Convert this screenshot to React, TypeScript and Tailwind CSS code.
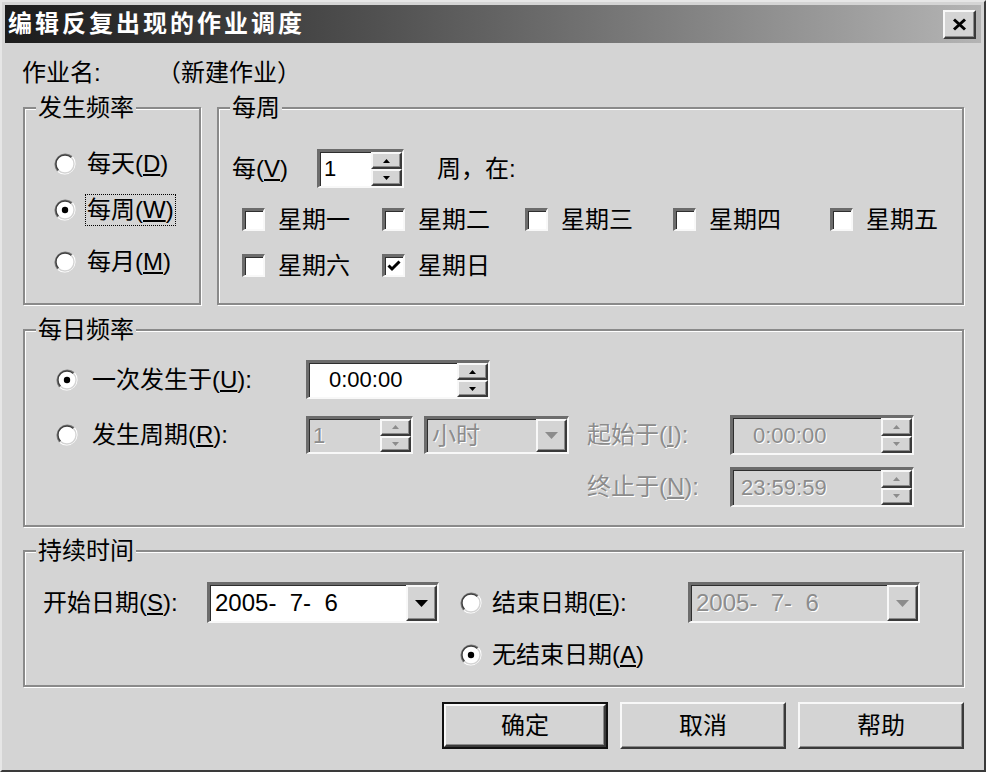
import React from "react";

const FONT = "font-['Liberation_Sans','Noto_Sans_CJK_SC',sans-serif]";
const SUNKEN =
  "border-t-[3px] border-l-[3px] border-r-2 border-b-2 border-t-[#6c6c6c] border-l-[#6c6c6c] border-r-[#f8f8f8] border-b-[#f8f8f8] shadow-[inset_1px_1px_0_#2e2e2e]";
const RAISED =
  "border-2 border-t-[#f8f8f8] border-l-[#f8f8f8] border-r-[#3a3a3a] border-b-[#3a3a3a] shadow-[inset_-1px_-1px_0_#8a8a8a]";
const DIS = "text-[#8c8c8c] [text-shadow:1px_1px_0_#fff]";

function Radio({ checked = false }: { checked?: boolean }) {
  return (
    <svg width="22" height="22" viewBox="0 0 22 22" className="shrink-0">
      <circle cx="11" cy="11" r="9.5" fill="#fff" />
      <path d="M3.8 18.2A10.2 10.2 0 0 1 18.2 3.8" fill="none" stroke="#808080" strokeWidth="1.6" />
      <path d="M4.6 17.4A9 9 0 0 1 17.4 4.6" fill="none" stroke="#404040" strokeWidth="1.4" />
      <path d="M18.2 3.8A10.2 10.2 0 0 1 3.8 18.2" fill="none" stroke="#fff" strokeWidth="1.6" />
      <path d="M17.4 4.6A9 9 0 0 1 4.6 17.4" fill="none" stroke="#d4d4d4" strokeWidth="1.4" />
      {checked && <circle cx="11" cy="11" r="3.2" fill="#000" />}
    </svg>
  );
}

function Check({ checked = false }: { checked?: boolean }) {
  return (
    <div className={`w-[23px] h-[23px] shrink-0 bg-white ${SUNKEN} flex items-center justify-center`}>
      {checked && (
        <svg width="14" height="12" viewBox="0 0 14 12">
          <path d="M1.5 5.5L5 9L12.5 1.5" fill="none" stroke="#000" strokeWidth="3" />
        </svg>
      )}
    </div>
  );
}

function RadioItem({
  checked,
  focus,
  children,
}: {
  checked?: boolean;
  focus?: boolean;
  children: React.ReactNode;
}) {
  return (
    <div className="flex items-center h-[30px]">
      <Radio checked={checked} />
      <span
        className={`ml-[9px] px-[1px] leading-[30px] border border-dotted ${focus ? "border-black" : "border-transparent"}`}
      >
        {children}
      </span>
    </div>
  );
}

function DayBox({ label, checked, className }: { label: string; checked?: boolean; className?: string }) {
  return (
    <div className={`flex items-center ${className ?? ""}`}>
      <Check checked={checked} />
      <span className="ml-[13px]">{label}</span>
    </div>
  );
}

function Spin({ disabled }: { disabled?: boolean }) {
  const c = disabled ? "#8c8c8c" : "#000";
  return (
    <div className="flex flex-col w-[31px] shrink-0">
      <div className={`flex-1 bg-[#d4d4d4] ${RAISED} flex items-center justify-center`}>
        <svg width="7" height="4" viewBox="0 0 7 4">
          <path d="M3.5 0L7 4H0Z" fill={c} />
        </svg>
      </div>
      <div className={`flex-1 bg-[#d4d4d4] ${RAISED} flex items-center justify-center`}>
        <svg width="7" height="4" viewBox="0 0 7 4">
          <path d="M0 0H7L3.5 4Z" fill={c} />
        </svg>
      </div>
    </div>
  );
}

function SpinEdit({
  value,
  className,
  disabled,
  pad,
}: {
  value: string;
  className: string;
  disabled?: boolean;
  pad: string;
}) {
  return (
    <div className={`${SUNKEN} ${disabled ? "bg-[#d4d4d4]" : "bg-white"} flex shrink-0 ${className}`}>
      <div className={`flex-1 flex items-center text-[22px] ${pad} ${disabled ? DIS : ""}`}>{value}</div>
      <Spin disabled={disabled} />
    </div>
  );
}

function Combo({ value, className, disabled }: { value: string; className: string; disabled?: boolean }) {
  return (
    <div className={`${SUNKEN} ${disabled ? "bg-[#d4d4d4]" : "bg-white"} flex shrink-0 ${className}`}>
      <div className={`flex-1 flex items-center pl-[5px] whitespace-pre ${disabled ? DIS : ""}`}>{value}</div>
      <div className={`w-[31px] bg-[#d4d4d4] ${RAISED} flex items-center justify-center`}>
        <svg width="13" height="7" viewBox="0 0 13 7">
          <path d="M0 0H13L6.5 7Z" fill={disabled ? "#8c8c8c" : "#000"} />
        </svg>
      </div>
    </div>
  );
}

function Group({
  title,
  className,
  children,
}: {
  title: string;
  className: string;
  children: React.ReactNode;
}) {
  return (
    <fieldset
      className={`border-2 border-[#8a8a8a] shadow-[inset_1px_1px_0_#fff,1px_1px_0_#fff] min-w-0 shrink-0 ${className}`}
    >
      <legend className="ml-[11px] px-[2px] bg-[#d4d4d4] leading-[22px]">{title}</legend>
      {children}
    </fieldset>
  );
}

function DlgButton({ label, isDefault }: { label: string; isDefault?: boolean }) {
  return (
    <div className={`w-[166px] h-[47px] ${isDefault ? "border-2 border-[#111]" : ""}`}>
      <button className={`w-full h-full bg-[#d4d4d4] ${RAISED} flex items-center justify-center`}>
        {label}
      </button>
    </div>
  );
}

export default function App() {
  return (
    <div
      className={`${FONT} w-[986px] h-[772px] bg-[#d4d4d4] text-black text-[24px] leading-[26px] border-2 border-t-[#e6e6e6] border-l-[#e6e6e6] border-r-[#3a3a3a] border-b-[#3a3a3a] p-[3px] flex flex-col overflow-hidden`}
    >
      {/* title bar */}
      <div className="h-[38px] shrink-0 flex items-center justify-between pl-[3px] pr-[5px] bg-linear-to-r from-[#1c1c1c] to-[#b4b4b4]">
        <span className="text-white font-bold text-[24px] tracking-[3px] leading-none">编辑反复出现的作业调度</span>
        <button className={`w-[33px] h-[29px] bg-[#d4d4d4] ${RAISED} flex items-center justify-center`}>
          <svg width="15" height="13" viewBox="0 0 15 13">
            <path d="M2 1.5L13 11.5M13 1.5L2 11.5" stroke="#000" strokeWidth="3" />
          </svg>
        </button>
      </div>

      <div className="mt-[19px] ml-[17px] flex items-center h-[22px]">
        <span className="w-[135px]">作业名:</span>
        <span>（新建作业）</span>
      </div>

      <div className="ml-[18px] w-[941px] flex flex-col">
        {/* top groups */}
        <div className="mt-[13px] flex gap-[16px]">
          <Group title="发生频率" className="w-[178px] h-[208px]">
            <div className="pl-[29px] flex flex-col">
              <div className="mt-[30px]">
                <RadioItem>
                  每天(<u>D</u>)
                </RadioItem>
              </div>
              <div className="mt-[16px]">
                <RadioItem checked focus>
                  每周(<u>W</u>)
                </RadioItem>
              </div>
              <div className="mt-[22px]">
                <RadioItem>
                  每月(<u>M</u>)
                </RadioItem>
              </div>
            </div>
          </Group>

          <Group title="每周" className="w-[747px] h-[208px]">
            <div className="mt-[30px] pl-[13px] flex items-center h-[39px]">
              <span className="w-[85px]">
                每(<u>V</u>)
              </span>
              <SpinEdit value="1" className="w-[87px] h-[39px]" pad="pl-[4px]" />
              <span className="ml-[33px]">周，在:</span>
            </div>
            <div className="mt-[20px] pl-[23px] flex items-center h-[23px]">
              <DayBox label="星期一" className="w-[140px]" />
              <DayBox label="星期二" className="w-[143px]" />
              <DayBox label="星期三" className="w-[148px]" />
              <DayBox label="星期四" className="w-[157px]" />
              <DayBox label="星期五" />
            </div>
            <div className="mt-[23px] pl-[23px] flex items-center h-[23px]">
              <DayBox label="星期六" className="w-[140px]" />
              <DayBox label="星期日" checked />
            </div>
          </Group>
        </div>

        {/* daily frequency */}
        <Group title="每日频率" className="mt-[14px] w-[941px] h-[208px]">
          <div className="mt-[19px] flex items-center h-[39px]">
            <div className="w-[281px] pl-[31px] flex items-center">
              <Radio checked />
              <span className="ml-[14px]">
                一次发生于(<u>U</u>):
              </span>
            </div>
            <SpinEdit value="0:00:00" className="w-[184px] h-[39px]" pad="pl-[20px]" />
          </div>
          <div className="mt-[16px] flex items-center h-[40px]">
            <div className="w-[281px] pl-[31px] flex items-center">
              <Radio />
              <span className="ml-[14px]">
                发生周期(<u>R</u>):
              </span>
            </div>
            <SpinEdit value="1" className="w-[107px] h-[38px]" pad="pl-[4px]" disabled />
            <Combo value="小时" className="ml-[11px] w-[145px] h-[38px]" disabled />
            <span className={`ml-[18px] w-[143px] ${DIS}`}>
              起始于(<u>I</u>):
            </span>
            <SpinEdit value="0:00:00" className="w-[184px] h-[40px]" pad="pl-[20px]" disabled />
          </div>
          <div className="mt-[12px] pl-[562px] flex items-center h-[40px]">
            <span className={`w-[143px] ${DIS}`}>
              终止于(<u>N</u>):
            </span>
            <SpinEdit value="23:59:59" className="w-[184px] h-[40px]" pad="pl-[8px]" disabled />
          </div>
        </Group>

        {/* duration */}
        <Group title="持续时间" className="mt-[13px] w-[941px] h-[147px]">
          <div className="mt-[20px] pl-[18px] flex items-center h-[41px]">
            <span className="w-[164px]">
              开始日期(<u>S</u>):
            </span>
            <Combo value="2005-  7-  6" className="w-[232px] h-[41px]" />
            <div className="ml-[21px] flex items-center w-[228px]">
              <Radio />
              <span className="ml-[10px]">
                结束日期(<u>E</u>):
              </span>
            </div>
            <Combo value="2005-  7-  6" className="w-[232px] h-[41px]" disabled />
          </div>
          <div className="mt-[17px] pl-[435px] flex items-center h-[30px]">
            <Radio checked />
            <span className="ml-[10px]">
              无结束日期(<u>A</u>)
            </span>
          </div>
        </Group>

        {/* buttons */}
        <div className="mt-[15px] flex justify-end gap-[12px]">
          <DlgButton label="确定" isDefault />
          <DlgButton label="取消" />
          <DlgButton label="帮助" />
        </div>
      </div>
    </div>
  );
}
